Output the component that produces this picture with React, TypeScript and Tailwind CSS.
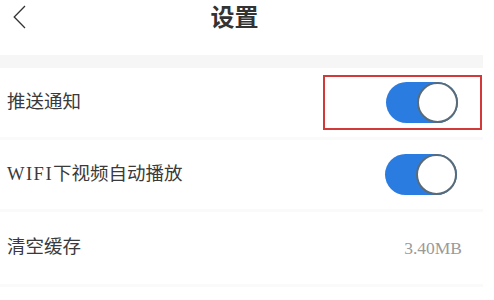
import React, { useState } from "react";

const Toggle: React.FC<{ on: boolean; onChange: () => void }> = ({ on, onChange }) => (
  <button
    onClick={onChange}
    className={`flex h-[41px] w-[72px] items-center rounded-full ${on ? "justify-end bg-[#2b7ce0]" : "justify-start bg-[#d9d9d9]"}`}
  >
    <span className="h-[41px] w-[41px] rounded-full border-2 border-[#5a6b78] bg-white" />
  </button>
);

export default function App() {
  const [push, setPush] = useState(true);
  const [wifi, setWifi] = useState(true);

  const rowText = "text-[18.5px] text-[#3a3a3a] [font-family:'Liberation_Serif','Noto_Sans_CJK_SC',serif]";

  return (
    <div className="h-[300px] w-[494px] overflow-hidden bg-white">
      <div className="w-[483px]">
        {/* header */}
        <div className="relative flex h-[55px] items-start justify-center pr-[14px]">
          <button className="absolute left-[13px] top-[5px]">
            <svg width="13" height="24" viewBox="0 0 13 24" fill="none">
              <path d="M12 1 L1.2 12 L12 23" stroke="#333" strokeWidth="1.3" />
            </svg>
          </button>
          <h1 className="mt-[2px] text-[24px] font-bold leading-[28px] text-[#333] [font-family:'Noto_Sans_CJK_SC',sans-serif]">
            设置
          </h1>
        </div>
        <div className="h-[13px] bg-[#f6f6f6]" />

        {/* push */}
        <div className="flex h-[72px] items-center justify-between border-b-[3px] border-[#fafafa] pl-[7px]">
          <span className={rowText}>推送通知</span>
          <div className="mr-[1px] flex h-[55px] w-[159px] items-center justify-end border-2 border-[#d23a3a] pr-[22px]">
            <Toggle on={push} onChange={() => setPush(!push)} />
          </div>
        </div>

        {/* wifi */}
        <div className="flex h-[72px] items-center justify-between border-b-[3px] border-[#fafafa] pl-[7px] pr-[26px]">
          <span className={rowText}>
            <span className="tracking-[1.5px]">WIFI</span>下视频自动播放
          </span>
          <Toggle on={wifi} onChange={() => setWifi(!wifi)} />
        </div>

        {/* cache */}
        <div className="flex h-[75px] items-center justify-between border-b-[3px] border-[#fafafa] pl-[7px] pr-[21px]">
          <span className={rowText}>清空缓存</span>
          <span className="text-[17.5px] text-[#9a9a9a] [font-family:'Liberation_Serif',serif]">3.40MB</span>
        </div>
      </div>
    </div>
  );
}
